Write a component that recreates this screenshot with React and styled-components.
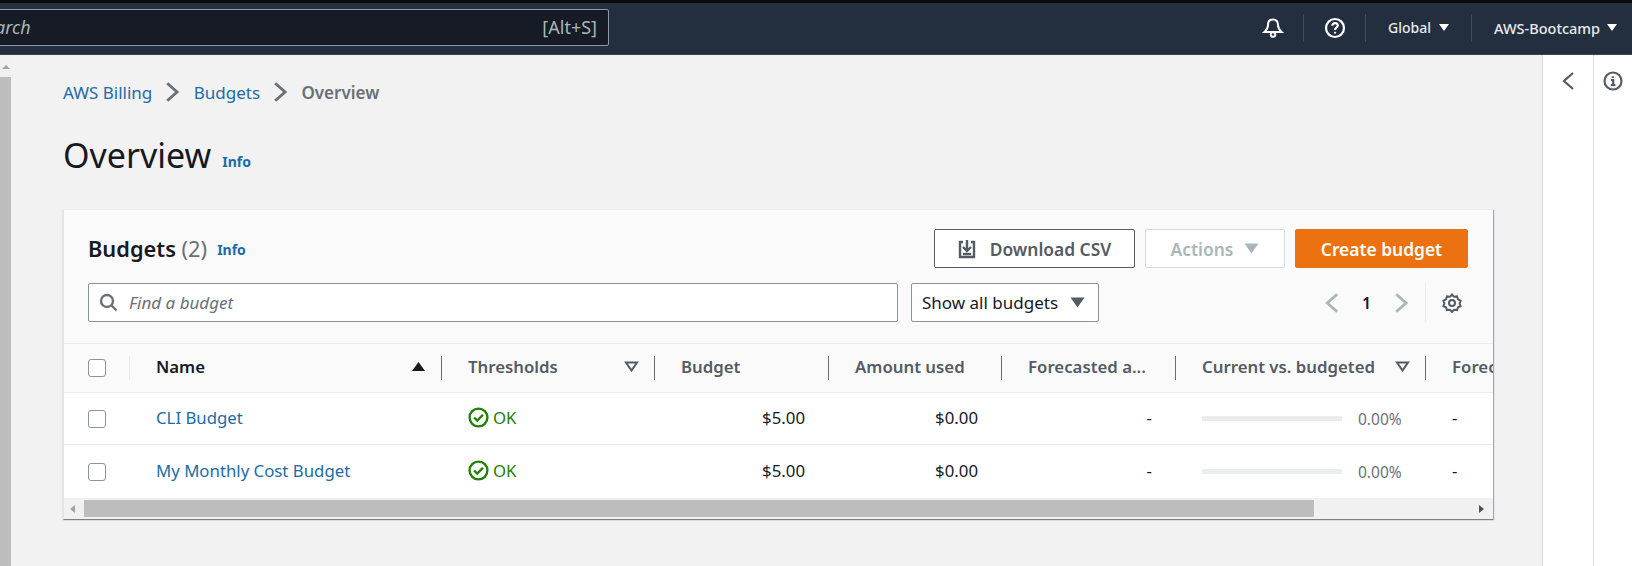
import React from "react";
import styled, { createGlobalStyle } from "styled-components";

const Global = createGlobalStyle`
  html, body { margin: 0; padding: 0; height: 100%; overflow: hidden; }
  body { font-family: "Noto Sans", "Open Sans", Arial, sans-serif; background: #f2f2f2; color: #16191f; }
  * { box-sizing: border-box; }
`;

const Page = styled.div`display: flex; flex-direction: column; width: 1632px; height: 566px; overflow: hidden;`;
const TopBar = styled.header`
  height: 55px; flex: none; background: #232f3e; border-top: 3px solid #0b0b0b;
  border-bottom: 1px solid #3a4654; display: flex; align-items: center; color: #fff;
`;
const SearchBox = styled.div`
  width: 669px; margin-left: -60px; height: 37px; margin-top: -3px; background: #161b25; border: 1px solid #8d99a8; border-radius: 2px;
  display: flex; align-items: center; justify-content: space-between; padding: 0 11px 0 36px; color: #aab7b8; font-size: 18px;
`;
const SearchWord = styled.span`font-style: italic;`;
const TopRight = styled.div`margin-left: auto; display: flex; align-items: center; height: 28px; margin-top: -2px;`;
const TopItem = styled.div`
  height: 28px; display: flex; align-items: center; justify-content: center; gap: 8px; width: ${p => p.$w}px;
  border-right: 1px solid #414d5c; color: #e9ebed; font-weight: 500; font-size: 14px;
`;
const AccountItem = styled(TopItem)`
  border-right: none; justify-content: flex-start; padding-left: 22px; font-size: 14.500px; gap: 7px;
`;
const Caret = styled.span`
  width: 0; height: 0; border-left: 5px solid transparent; border-right: 5px solid transparent;
  border-top: 7px solid #fff; display: inline-block;
`;
const Body = styled.div`flex: 1; display: flex; min-height: 0;`;
const PageScroll = styled.div`width: 11px; flex: none; background: #f1f1f1; display: flex; flex-direction: column; align-items: center;`;
const ArrowUp = styled.span`
  margin-top: 10px; width: 0; height: 0; border-left: 4px solid transparent; border-right: 4px solid transparent; border-bottom: 4px solid #a3a3a3;
`;
const PageThumb = styled.div`margin-top: 8px; flex: 1; width: 100%; background: #bdbdbd;`;
const Main = styled.main`flex: 1; min-width: 0; padding: 25px 49px 0 52px;`;
const Crumbs = styled.nav`display: flex; align-items: center; height: 24px; font-size: 17px; gap: 13px;`;
const CrumbLink = styled.a`color: #1b6ca8;`;
const CrumbNow = styled.span`color: #687078; font-weight: 600;`;
const TitleRow = styled.div`display: flex; align-items: flex-start; gap: 11px; margin-top: 26px; height: 50px;`;
const Title = styled.h1`margin: 0; font-size: 34px; font-weight: 400; line-height: 50px; color: #16191f;`;
const Info = styled.a`color: #1b6ca8; font-size: 14px; font-weight: 700;`;
const HeadingInfo = styled(Info)`margin-top: 22px;`;
const Card = styled.section`
  margin-top: 29px; background: #fafafa; border-left: 1px solid #e3e5e5; border-top: 1px solid #eaeded;
  box-shadow: 1px 1px 1px rgba(0, 28, 36, 0.3), 0 1px 1px rgba(0, 28, 36, 0.3); height: 310px; display: flex; flex-direction: column;
`;
const Toolbar = styled.div`padding: 19px 25px 21px 24px; display: flex; flex-direction: column; gap: 15px; border-bottom: 1px solid #eaeded;`;
const ToolRow = styled.div`display: flex; align-items: center; height: 39px;`;
const CardTitle = styled.h2`margin: 0; font-size: 21.800px; font-weight: 600; color: #16191f;`;
const Count = styled.span`font-weight: 400; color: #687078;`;
const TitleInfo = styled(Info)`margin-left: 10px; margin-top: 2px;`;
const Actions = styled.div`margin-left: auto; display: flex; gap: 10px;`;
const Button = styled.button`
  height: 39px; width: ${p => p.$w}px; border-radius: 2px; font: inherit; font-size: 17.400px; font-weight: 600;
  display: flex; align-items: center; justify-content: center; gap: ${p => p.$gap || 11}px; background: #fff; padding: 0;
  border: 1px solid #545b64; color: #545b64;
`;
const DisabledButton = styled(Button)`border-color: #d5dbdb; color: #aab7b8;`;
const PrimaryButton = styled(Button)`background: #ec7211; border-color: #ec7211; color: #fff;`;
const Find = styled.div`
  width: 810px; height: 39px; background: #fff; border: 1px solid #879596; border-radius: 2px;
  display: flex; align-items: center; gap: 11px; padding-left: 10px; font-size: 17px; font-style: italic; color: #687078;
`;
const Select = styled.div`
  margin-left: 13px; width: 188px; height: 39px; background: #fff; border: 1px solid #879596; border-radius: 2px;
  display: flex; align-items: center; justify-content: space-between; padding: 0 13px 0 10px; font-size: 17px; color: #16191f;
`;
const Pager = styled.div`margin-left: auto; display: flex; align-items: center; height: 39px; padding-right: 6px; color: #16191f; font-weight: 600; font-size: 16px;`;
const PageNum = styled.span`width: 54px; text-align: center;`;
const GearCell = styled.div`
  margin-left: 16px; padding-left: 16px; height: 39px; border-left: 1px solid #eaeded; display: flex; align-items: center;
`;
const Table = styled.div`flex: 1; overflow: hidden; min-height: 0;`;
const Row = styled.div`
  display: grid; grid-template-columns: 66px 312px 213px 174px 173px 174px 250px 200px; width: 1562px;
  height: ${p => p.$h}px; align-items: center; background: ${p => (p.$head ? "#fafafa" : "#fff")};
  border-bottom: ${p => (p.$noline ? "none" : "1px solid #eaeded")};
`;
const HeadCell = styled.div`
  height: 24px; display: flex; align-items: center; justify-content: space-between; padding: 0 15px 3px 26px; white-space: nowrap;
  border-right: 1px solid #687078; font-size: 16.800px; font-weight: 600;
  color: ${p => (p.$dark ? "#16191f" : "#545b64")};
`;
const CheckCell = styled.div`
  padding-left: 24px; display: flex; align-items: center; height: 24px;
  border-right: ${p => (p.$head ? "1px solid #eaeded" : "none")};
`;
const Check = styled.span`width: 18px; height: 18px; background: #fff; border: 1px solid #8d9596; border-radius: 3px; display: block;`;
const Cell = styled.div`
  padding: 0 24px 2px 26px; font-size: 16.800px; text-align: ${p => (p.$right ? "right" : "left")}; white-space: nowrap; color: #16191f;
`;
const NameLink = styled.a`color: #1b6ca8;`;
const Status = styled.span`display: flex; align-items: center; gap: 4px; color: #1d8102;`;
const ProgressCell = styled.div`display: flex; align-items: center; gap: 16px; padding-left: 26px; font-size: 15.500px; color: #687078;`;
const Bar = styled.span`width: 140px; height: 5px; background: #eaeded; display: block;`;
const HScroll = styled.div`height: 21px; flex: none; background: #f1f1f1; display: flex; align-items: center; padding: 0 9px 0 6px;`;
const ArrowLeft = styled.span`width: 0; height: 0; border-top: 4px solid transparent; border-bottom: 4px solid transparent; border-right: 5px solid #a3a3a3;`;
const ArrowRight = styled.span`margin-left: auto; width: 0; height: 0; border-top: 4px solid transparent; border-bottom: 4px solid transparent; border-left: 5px solid #505050;`;
const HThumb = styled.div`margin-left: 9px; width: 1230px; height: 17px; background: #bdbdbd;`;
const SidePanel = styled.aside`
  flex: none; width: ${p => p.$w}px; background: #fff; border-left: 1px solid #d5dbdb; display: flex; justify-content: center; padding-top: 16px;
`;

const Chev = ({ dir = "right", c = "#687078", s = 22, w = 2.600 }) => (
  <svg width={s * 0.7} height={s} viewBox="0 0 14 20" fill="none" stroke={c} strokeWidth={w}>
    <path d={dir === "right" ? "M2 2l9 8-9 8" : "M12 2l-9 8 9 8"} />
  </svg>
);
const Ok = () => (
  <svg width="21" height="21" viewBox="0 0 20 20" fill="none" stroke="#1d8102" strokeWidth="2.200">
    <circle cx="10" cy="10" r="8.500" />
    <path d="M5.800 10l3 3 5.400-5.600" />
  </svg>
);
const SortUp = () => (
  <svg width="15" height="11" viewBox="0 0 15 11"><path d="M7.500 1l6.500 9H1z" fill="#16191f" /></svg>
);
const SolidDown = ({ fill }) => (
  <svg width="15" height="11" viewBox="0 0 15 11"><path d="M.5 .5h14L7.500 10.500z" fill={fill} /></svg>
);
const FilterDown = () => (
  <svg width="15" height="11" viewBox="0 0 15 11"><path d="M2 1.500h11L7.500 9.500z" fill="none" stroke="#545b64" strokeWidth="2" /></svg>
);

const rows = ["CLI Budget", "My Monthly Cost Budget"];

export default function App() {
  return (
    <Page>
      <Global />
      <TopBar>
        <SearchBox>
          <SearchWord>Search</SearchWord>
          <span>[Alt+S]</span>
        </SearchBox>
        <TopRight>
          <TopItem $w={62}>
            <svg width="22" height="22" viewBox="0 0 22 22" fill="none" stroke="#fff" strokeWidth="2">
              <path d="M11 2.500c-3 0-5 2.200-5 5.500 0 3.200-1 4.800-3.500 7h17C17 12.800 16 11.200 16 8c0-3.300-2-5.500-5-5.500z" />
              <circle cx="11" cy="17.500" r="2.300" />
            </svg>
          </TopItem>
          <TopItem $w={62}>
            <svg width="22" height="22" viewBox="0 0 22 22" fill="none" stroke="#fff" strokeWidth="2.200">
              <circle cx="11" cy="11" r="9" />
              <path d="M8.300 8.800c0-1.700 1.200-2.700 2.800-2.700s2.700 1 2.700 2.400c0 2.200-2.800 2.200-2.800 4.400" />
              <path d="M11 14.800v1.700" />
            </svg>
          </TopItem>
          <TopItem $w={106}>Global <Caret /></TopItem>
          <AccountItem $w={160}>AWS-Bootcamp <Caret /></AccountItem>
        </TopRight>
      </TopBar>
      <Body>
        <PageScroll><ArrowUp /><PageThumb /></PageScroll>
        <Main>
          <Crumbs>
            <CrumbLink>AWS Billing</CrumbLink>
            <Chev />
            <CrumbLink>Budgets</CrumbLink>
            <Chev />
            <CrumbNow>Overview</CrumbNow>
          </Crumbs>
          <TitleRow><Title>Overview</Title><HeadingInfo>Info</HeadingInfo></TitleRow>
          <Card>
            <Toolbar>
              <ToolRow>
                <CardTitle>Budgets <Count>(2)</Count></CardTitle>
                <TitleInfo>Info</TitleInfo>
                <Actions>
                  <Button $w={201} $gap={14}>
                    <svg width="18" height="20" viewBox="0 0 18 20" fill="none" stroke="#545b64" strokeWidth="2.400">
                      <path d="M5 3H2v15h14V3h-3" />
                      <path d="M9 1v10M5 8l4 4 4-4" />
                      <path d="M5 15h8" />
                    </svg>
                    Download CSV
                  </Button>
                  <DisabledButton $w={140}>Actions <SolidDown fill="#aab7b8" /></DisabledButton>
                  <PrimaryButton $w={173}>Create budget</PrimaryButton>
                </Actions>
              </ToolRow>
              <ToolRow>
                <Find>
                  <svg width="19" height="19" viewBox="0 0 19 19" fill="none" stroke="#687078" strokeWidth="2.400">
                    <circle cx="8" cy="8" r="6" />
                    <path d="M12.500 12.500l5 5" />
                  </svg>
                  Find a budget
                </Find>
                <Select>Show all budgets <SolidDown fill="#545b64" /></Select>
                <Pager>
                  <Chev dir="left" c="#aab7b8" />
                  <PageNum>1</PageNum>
                  <Chev c="#aab7b8" />
                  <GearCell>
                    <svg width="20" height="20" viewBox="0 0 20 20" fill="none" stroke="#545b64" strokeWidth="2">
                      <path d="M10 1.500l2 2.300 3-.4 1 2.900 2.600 1.500-1 2.700 1 2.700-2.600 1-1 2.900-3-.4-2 2.300-2-2.300-3 .4-1-2.900-2.600-1 1-2.700-1-2.700 2.600-1.500 1-2.900 3 .4z" />
                      <circle cx="10" cy="10" r="3" />
                    </svg>
                  </GearCell>
                </Pager>
              </ToolRow>
            </Toolbar>
            <Table>
              <Row $head $h={49}>
                <CheckCell $head><Check /></CheckCell>
                <HeadCell $dark>Name <SortUp /></HeadCell>
                <HeadCell>Thresholds <FilterDown /></HeadCell>
                <HeadCell>Budget</HeadCell>
                <HeadCell>Amount used</HeadCell>
                <HeadCell>Forecasted a...</HeadCell>
                <HeadCell>Current vs. budgeted <FilterDown /></HeadCell>
                <HeadCell>Forecasted</HeadCell>
              </Row>
              {rows.map((name, i) => (
                <Row key={name} $h={i === 0 ? 52 : 53} $noline={i === 1}>
                  <CheckCell><Check /></CheckCell>
                  <Cell><NameLink>{name}</NameLink></Cell>
                  <Cell><Status><Ok /> OK</Status></Cell>
                  <Cell $right>$5.00</Cell>
                  <Cell $right>$0.00</Cell>
                  <Cell $right>-</Cell>
                  <ProgressCell><Bar /> 0.00%</ProgressCell>
                  <Cell>-</Cell>
                </Row>
              ))}
            </Table>
            <HScroll><ArrowLeft /><HThumb /><ArrowRight /></HScroll>
          </Card>
        </Main>
        <SidePanel $w={51}><Chev dir="left" c="#545b64" s={20} w={2.200} /></SidePanel>
        <SidePanel $w={39}>
          <svg width="20" height="20" viewBox="0 0 20 20" fill="none" stroke="#545b64" strokeWidth="2.200">
            <circle cx="10" cy="10" r="8.500" />
            <path d="M8 9h2.200v5M7.800 14h4.600M9.800 5.200v1.800" />
          </svg>
        </SidePanel>
      </Body>
    </Page>
  );
}
